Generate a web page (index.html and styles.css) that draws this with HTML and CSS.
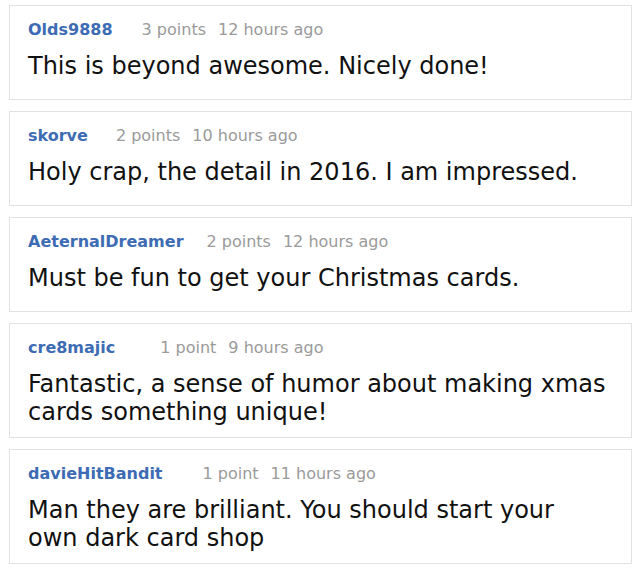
FILE: index.html
```html
<!DOCTYPE html>
<html lang="en">
<head>
<meta charset="utf-8">
<title>Comments</title>
<link rel="stylesheet" href="styles.css">
</head>
<body>
<ul class="comments">
  <li class="comment">
    <div class="comment-head">
      <a class="user gap-29">Olds9888</a>
      <span class="meta">3 points</span>
      <span class="meta">12 hours ago</span>
    </div>
    <p class="comment-body">This is beyond awesome. Nicely done!</p>
  </li>
  <li class="comment">
    <div class="comment-head">
      <a class="user gap-28">skorve</a>
      <span class="meta">2 points</span>
      <span class="meta">10 hours ago</span>
    </div>
    <p class="comment-body">Holy crap, the detail in 2016. I am impressed.</p>
  </li>
  <li class="comment">
    <div class="comment-head">
      <a class="user gap-23">AeternalDreamer</a>
      <span class="meta">2 points</span>
      <span class="meta">12 hours ago</span>
    </div>
    <p class="comment-body">Must be fun to get your Christmas cards.</p>
  </li>
  <li class="comment">
    <div class="comment-head">
      <a class="user gap-45">cre8majic</a>
      <span class="meta">1 point</span>
      <span class="meta">9 hours ago</span>
    </div>
    <p class="comment-body">Fantastic, a sense of humor about making xmas cards something unique!</p>
  </li>
  <li class="comment">
    <div class="comment-head">
      <a class="user gap-40">davieHitBandit</a>
      <span class="meta">1 point</span>
      <span class="meta">11 hours ago</span>
    </div>
    <p class="comment-body">Man they are brilliant. You should start your own dark card shop</p>
  </li>
</ul>
</body>
</html>
```

FILE: styles.css
```css
html, body {
  background: #ffffff;
}

body {
  margin: 5px 8px 0 9px;
  font-family: "DejaVu Sans", Verdana, sans-serif;
  color: #111111;
}

.comments {
  list-style: none;
  margin: 0;
  padding: 0;
  display: flex;
  flex-direction: column;
  gap: 11px;
}

.comment {
  box-sizing: border-box;
  min-height: 95px;
  border: 1px solid #e2e2e2;
  padding: 14px 23px 11px 18px;
  display: flex;
  flex-direction: column;
  gap: 12px;
}

.comment-head {
  display: flex;
  align-items: baseline;
  gap: 12px;
  font-size: 16px;
  line-height: 20px;
}

.user {
  color: #3d6cb4;
  font-weight: bold;
  text-decoration: none;
}

.gap-23 { margin-right: 11px; }
.gap-28 { margin-right: 16px; }
.gap-29 { margin-right: 17px; }
.gap-40 { margin-right: 28px; }
.gap-45 { margin-right: 33px; }

.meta {
  color: #9a9a9a;
}

.comment-body {
  margin: 0;
  font-size: 24px;
  line-height: 28px;
}
```
